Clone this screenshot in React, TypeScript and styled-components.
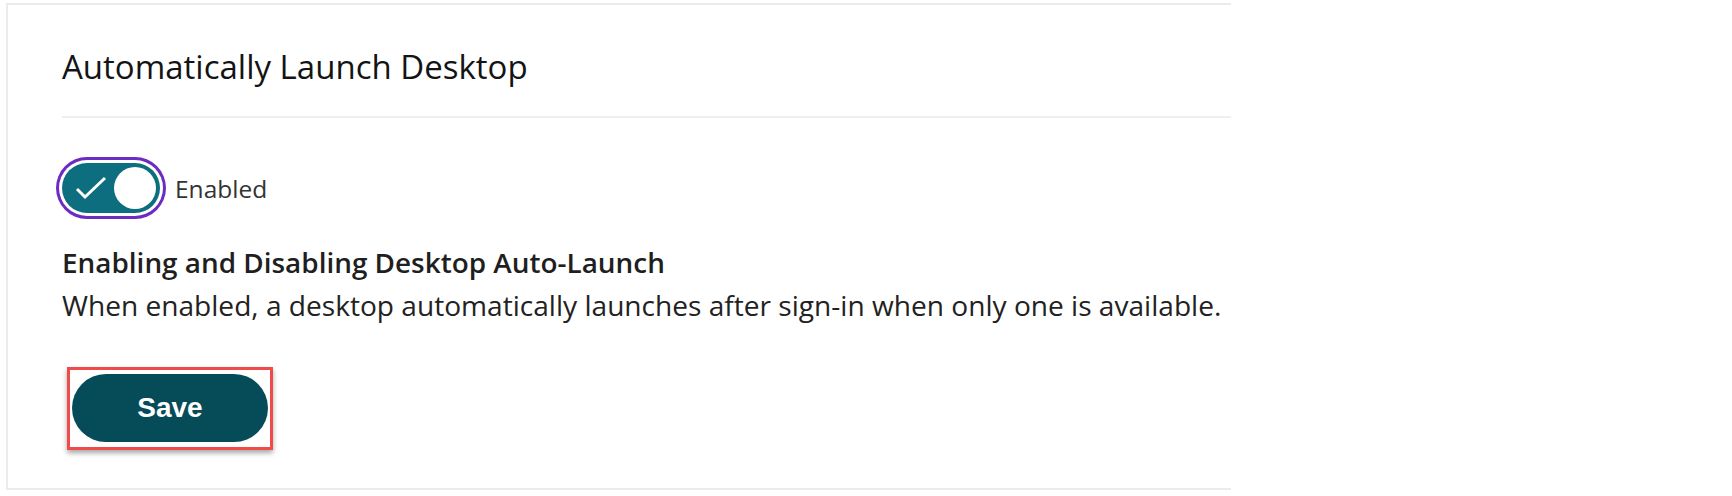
import React, { useState } from "react";
import styled, { createGlobalStyle } from "styled-components";

const GlobalStyle = createGlobalStyle`
  html, body {
    margin: 0;
    padding: 0;
    background: #ffffff;
  }
  body {
    font-family: 'Open Sans', 'Liberation Sans', sans-serif;
  }
  *, *::before, *::after {
    box-sizing: border-box;
  }
`;

const Page = styled.div`
  padding: 3px 0 0 6px;
`;

const Card = styled.section`
  width: 1225px;
  border: 2px solid #ebebeb;
  border-right: none;
  padding: 42px 0 38px 54px;
  background: #fff;
`;

const Title = styled.h2`
  margin: 0;
  font-size: 33px;
  line-height: 40px;
  font-weight: 500;
  color: #141414;
`;

const Divider = styled.hr`
  margin: 29px 0 0 0;
  border: none;
  height: 2px;
  background: #efefef;
`;

const ToggleRow = styled.div`
  display: flex;
  align-items: center;
  gap: 15px;
  margin-top: 45px;
`;

const Track = styled.button<{ $on: boolean }>`
  width: 98px;
  height: 50px;
  border: none;
  border-radius: 25px;
  padding: 0 4px 0 13px;
  display: flex;
  align-items: center;
  justify-content: space-between;
  background: ${(p) => (p.$on ? "#0c6e7e" : "#8a8a8a")};
  box-shadow: 0 0 0 3px #fff, 0 0 0 6px #6c2bc2;
  cursor: pointer;
`;

const Knob = styled.span`
  width: 42px;
  height: 42px;
  border-radius: 50%;
  background: #fff;
`;

const ToggleLabel = styled.span`
  font-size: 24.5px;
  color: #333;
`;

const SubHeading = styled.h3`
  margin: 30px 0 0 0;
  font-size: 27.9px;
  line-height: 38px;
  font-weight: 600;
  color: #1f1f1f;
`;

const Description = styled.p`
  margin: 5px 0 0 0;
  font-size: 28.1px;
  line-height: 38px;
  color: #222;
`;

const Highlight = styled.div`
  display: inline-flex;
  margin: 43px 0 0 5px;
  padding: 4px 2px 5px;
  border: 3px solid #f04a4a;
  box-shadow: 0 3px 5px rgba(0, 0, 0, 0.35);
`;

const SaveButton = styled.button`
  width: 196px;
  height: 68px;
  border: none;
  border-radius: 34px;
  background: #054b58;
  color: #fff;
  font-family: 'Liberation Sans', Arial, sans-serif;
  font-weight: 700;
  font-size: 28px;
  cursor: pointer;
`;

export default function App() {
  const [on, setOn] = useState(true);
  return (
    <Page>
      <GlobalStyle />
      <Card>
        <Title>Automatically Launch Desktop</Title>
        <Divider />
        <ToggleRow>
          <Track $on={on} onClick={() => setOn(!on)} aria-pressed={on}>
            <svg width="32" height="24" viewBox="0 0 32 24">
              <path d="M2 13 L10 21 L30 2" fill="none" stroke="#fff" strokeWidth="3" />
            </svg>
            <Knob />
          </Track>
          <ToggleLabel>Enabled</ToggleLabel>
        </ToggleRow>
        <SubHeading>Enabling and Disabling Desktop Auto-Launch</SubHeading>
        <Description>
          When enabled, a desktop automatically launches after sign-in when only one is available.
        </Description>
        <Highlight>
          <SaveButton>Save</SaveButton>
        </Highlight>
      </Card>
    </Page>
  );
}
